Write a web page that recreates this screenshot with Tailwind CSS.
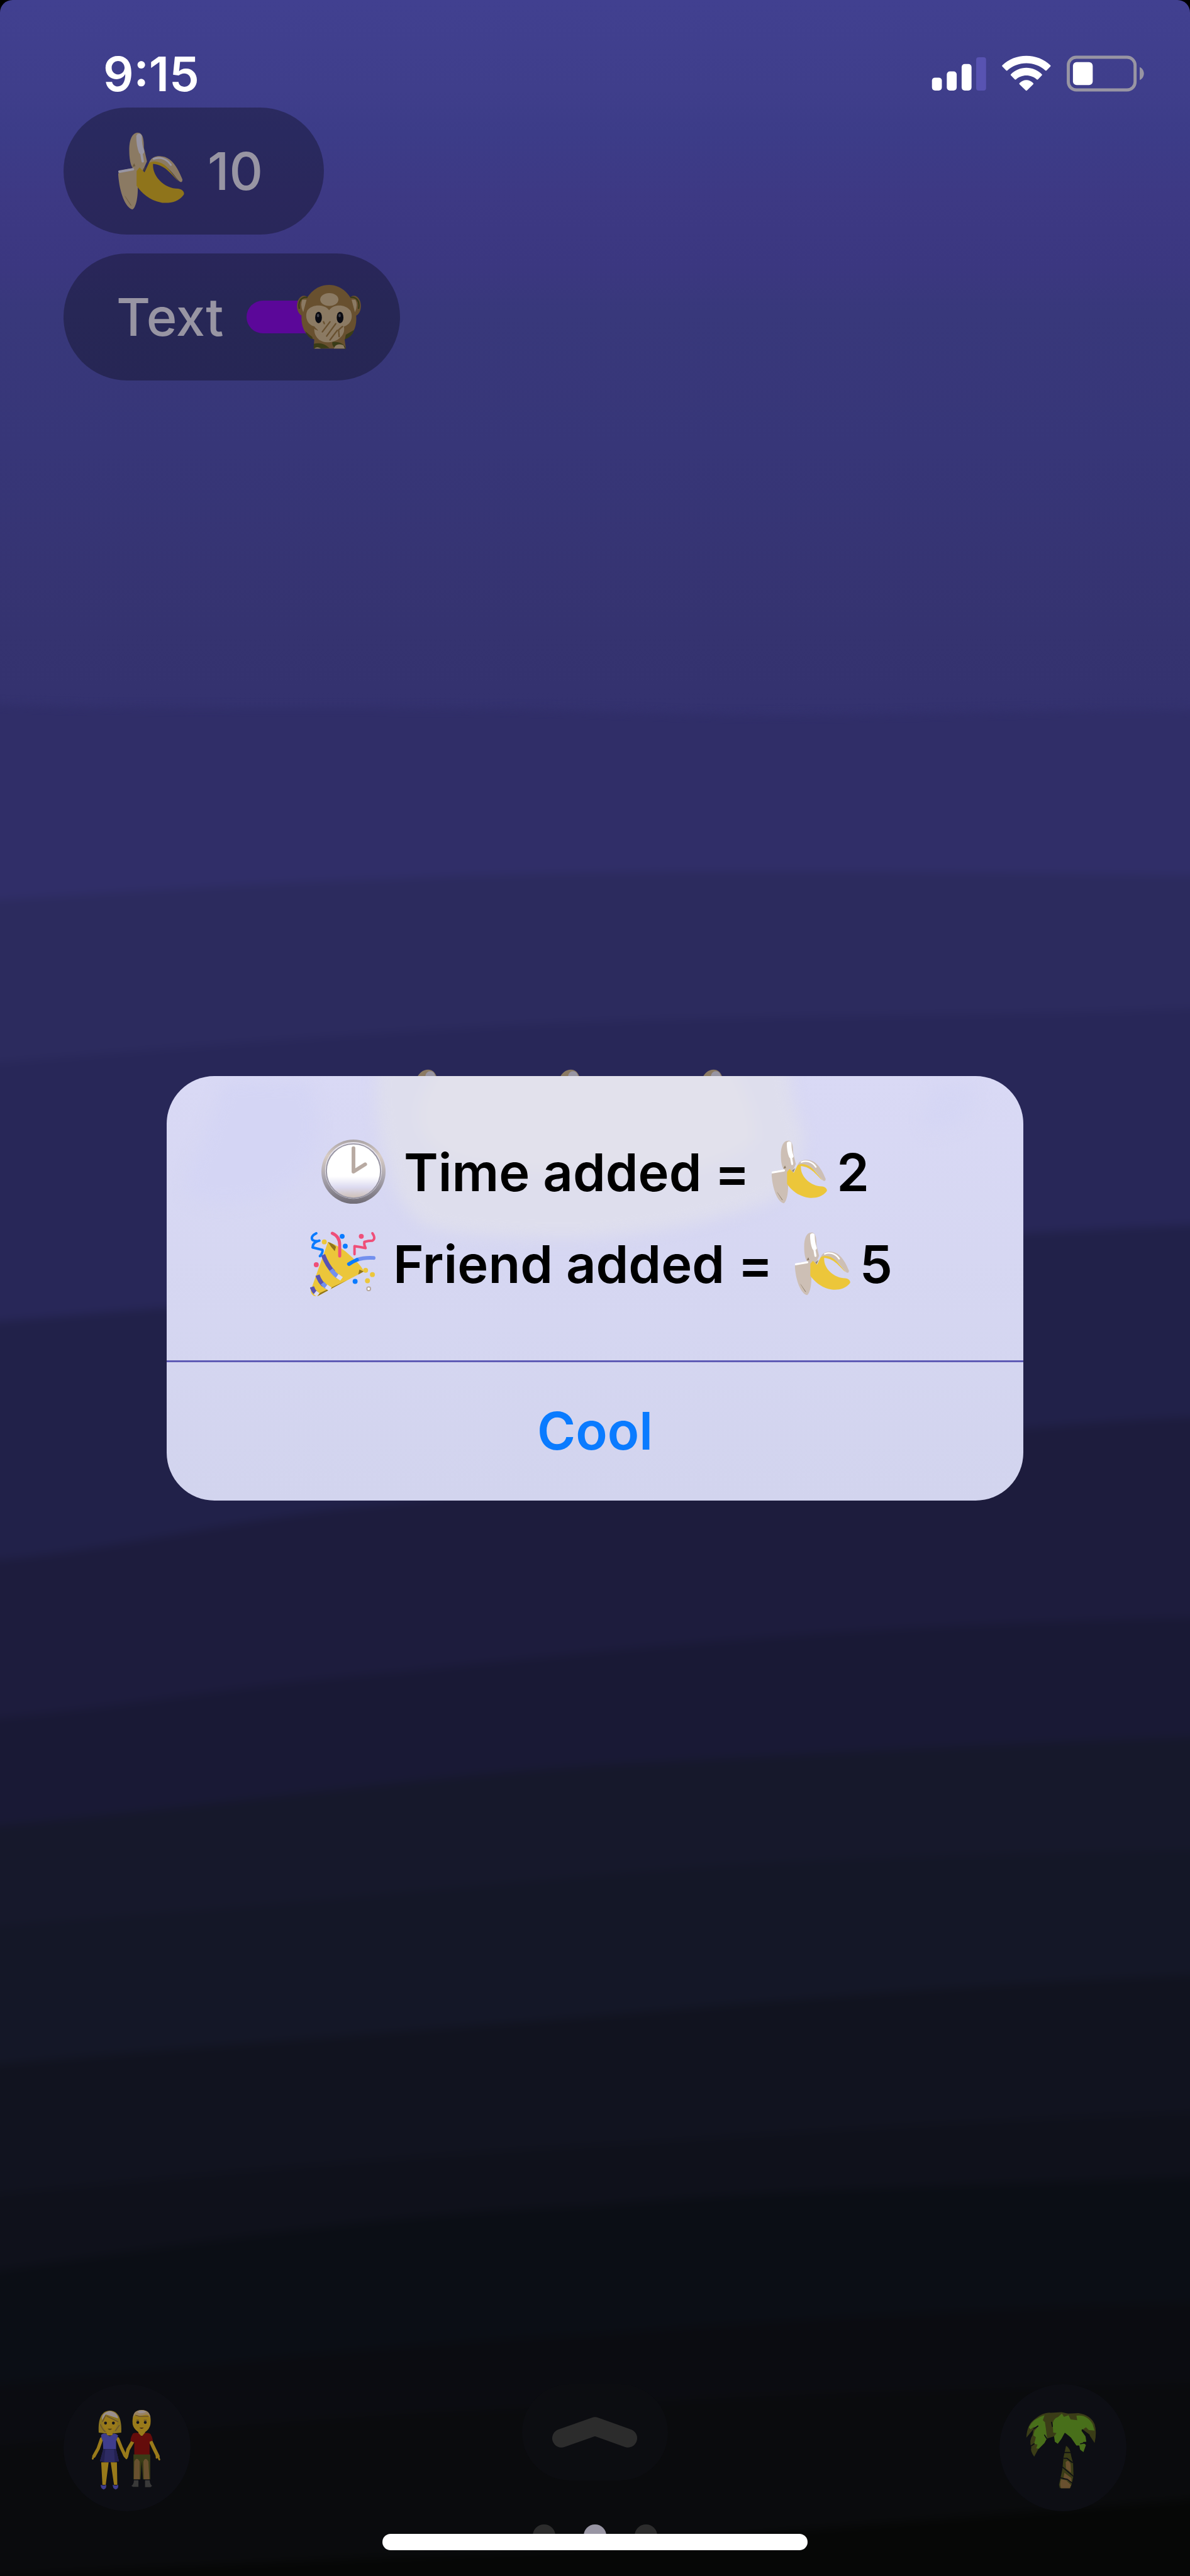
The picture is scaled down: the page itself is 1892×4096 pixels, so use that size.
<!DOCTYPE html>
<html lang="en">
<head>
    <meta charset="UTF-8">
    <meta name="viewport" content="width=device-width, initial-scale=1.0">
    <script src="https://cdn.jsdelivr.net/npm/@tailwindcss/browser@4"></script>

    <title>Bananas</title>
</head>
<body class="bg-black font-['Inter','Liberation_Sans',sans-serif]">

<!-- shared banana: fill = skin, currentColor = peel, stroke = highlight -->
<svg class="hidden">
  <symbol id="banana" viewBox="9 12 110 128" preserveAspectRatio="none">
    <path stroke="none" fill="currentColor" d="M35 72C30 68 28 55 28 42C28 24 33 13 42 13C51 13 52 26 52 38L57 60L50 76L37 76Z"/>
    <path stroke="none" fill="currentColor" d="M10 82C10 74 22 73 36 71L42 74V105C42 125 37 139 33 139C22 136 12 112 10 82Z"/>
    <path fill="none" stroke-width="9" stroke-linecap="round" d="M44 19C44 28 45 36 48 44"/>
    <path fill="none" stroke-width="4" stroke-linecap="round" d="M47 42L50 60M12 77L34 73"/>
    <path stroke="none" fill="currentColor" d="M60 64C62 54 72 50 82 52C98 54 108 72 115 90C115 95 112 95 109 92C98 80 90 62 66 62Z"/>
    <path fill="none" stroke-width="3" stroke-linecap="round" d="M68 56C77 52 89 55 96 66"/>
    <path stroke="none" d="M40 76L45 70L53 78L60 63C68 57 82 61 91 71C98 79 104 87 109 93C98 84 88 66 67 64C65 84 85 105 108 105C115 106 119 111 117 115C108 127 95 129 82 128C62 125 48 112 40 100Z"/>
    <path stroke="none" fill="#5c4a28" fill-opacity=".6" d="M50 73L56 68L52 77ZM33 69L36 63L38 68ZM20 116L22 118L32 133L30 132Z"/>
  </symbol>
</svg>

<div class="relative flex min-h-screen flex-col overflow-hidden rounded-t-[20px] bg-[#060706]">

  <!-- night sky, painted in soft bands -->
  <svg class="absolute inset-0 h-full w-full" viewBox="0 0 1920 4157" preserveAspectRatio="none" aria-hidden="true">
    <defs>
      <linearGradient id="sky" gradientUnits="userSpaceOnUse" x1="0" y1="0" x2="0" y2="1200">
        <stop offset="0" stop-color="#414090"/>
        <stop offset=".12" stop-color="#3f3e8b"/>
        <stop offset=".18" stop-color="#3c3c88"/>
        <stop offset=".26" stop-color="#3d3984"/>
        <stop offset=".36" stop-color="#3b3780"/>
        <stop offset=".42" stop-color="#38387b"/>
        <stop offset=".6" stop-color="#373678"/>
        <stop offset=".85" stop-color="#353370"/>
        <stop offset="1" stop-color="#33316e"/>
      </linearGradient>
      <filter id="soft" x="-5%" y="-5%" width="110%" height="110%" color-interpolation-filters="sRGB"><feGaussianBlur stdDeviation="7"/></filter>
    </defs>
    <rect width="1920" height="1300" fill="url(#sky)"/>
    <g filter="url(#soft)">
      <path fill="#302e68" d="M-40 1136C300 1150 700 1135 1100 1152C1400 1160 1700 1140 1960 1148V4200H-40Z"/>
      <path fill="#2c2b5e" d="M-40 1455C200 1440 400 1425 640 1418C1000 1400 1500 1405 1960 1414V4200H-40Z"/>
      <path fill="#282758" d="M-40 1718C300 1690 700 1655 1050 1646C1400 1635 1700 1640 1960 1625V4200H-40Z"/>
      <path fill="#212149" d="M-40 2136C200 2115 400 2100 700 2075C1100 2020 1500 1995 1960 1975V4200H-40Z"/>
      <path fill="#1d1c3d" d="M-40 2520C150 2510 380 2450 600 2430C1000 2390 1400 2310 1960 2285V4200H-40Z"/>
      <path fill="#191935" d="M-40 2775C150 2765 400 2715 650 2698C1000 2660 1400 2620 1960 2610V4200H-40Z"/>
      <path fill="#16182b" d="M-40 2950C300 2920 650 2870 950 2850C1300 2830 1600 2815 1960 2802V4200H-40Z"/>
      <path fill="#141727" d="M-40 3110C400 3080 800 3040 1100 3015C1400 2995 1700 2990 1960 2985V4200H-40Z"/>
      <path fill="#11131f" d="M-40 3335C300 3305 700 3275 950 3255C1300 3225 1600 3200 1960 3186V4200H-40Z"/>
      <path fill="#0f111b" d="M-40 3545C300 3510 700 3475 1000 3460C1300 3440 1600 3420 1960 3408V4200H-40Z"/>
      <path fill="#0b0e15" d="M-40 3670C300 3620 650 3570 950 3560C1300 3530 1600 3525 1960 3512V4200H-40Z"/>
      <path fill="#0b0c11" d="M-40 3850C300 3822 650 3780 950 3768C1300 3740 1600 3725 1960 3715V4200H-40Z"/>
      <path fill="#0a0b0d" d="M-40 3950C300 3920 600 3895 900 3885C1300 3860 1600 3855 1960 3845V4200H-40Z"/>
      <path fill="#060706" d="M-40 4160C300 4140 700 4125 1000 4110C1300 4080 1600 4060 1960 4030V4200H-40Z"/>
    </g>
  </svg>

  <!-- status bar -->
  <header class="relative flex h-[171px] items-center pt-[62px] pl-[164px] pr-[73px]">
    <time class="text-[76px] leading-none font-semibold text-white">9:15</time>
    <div class="ml-auto flex gap-[25px]">
      <svg class="h-[58px] w-[87px]" viewBox="1503 88 88 59" role="img" aria-label="Signal">
        <g fill="#fff">
          <rect x="1503.5" y="124" width="16" height="21" rx="5"/>
          <rect x="1527.5" y="114" width="16" height="31" rx="5"/>
          <rect x="1551.5" y="102" width="16" height="43" rx="5"/>
        </g>
        <rect x="1575" y="91" width="16" height="54" rx="4" fill="#5853b2"/>
      </svg>
      <svg class="h-[58px] w-[78px]" viewBox="471 84 233 177" preserveAspectRatio="none" fill="#fff" role="img" aria-label="Wi-Fi">
        <path d="M473 132C504 102 543 86 587 86C631 86 670 102 701 132Q704 135 701 138L683 157Q680 160 677 157C652 134 621 122 587 122C553 122 522 134 497 157Q494 160 491 157L473 138Q470 135 473 132Z"/>
        <path d="M513 176C533 155 559 144 587 144C615 144 641 155 661 176Q663 179 660 182L642 201Q639 204 636 201C623 189 606 182 587 182C568 182 551 189 538 201Q535 204 532 201L514 182Q511 179 513 176Z"/>
        <path d="M554 219Q570 204 587 204Q604 204 620 219Q622 222 619 225L590 254Q587 257 584 254L555 225Q552 222 554 219Z"/>
      </svg>
      <svg class="h-[58px] w-[123px]" viewBox="1720 88 125 59" role="img" aria-label="Battery">
        <rect x="1722.5" y="91" width="108" height="53" rx="13" fill="none" stroke="#9895a3" stroke-width="5"/>
        <rect x="1730" y="99" width="32" height="37" rx="6" fill="#fff"/>
        <path d="M1838 107C1847 111 1847 124 1838 128Z" fill="#9895a3"/>
      </svg>
    </div>
  </header>

  <!-- score and text toggle -->
  <main class="relative flex flex-1 flex-col items-start gap-[30px] pl-[101px] text-[83px] leading-none font-medium text-[#9895a3]">
    <div class="flex h-[202px] items-center gap-[36px] rounded-full bg-black/30 pr-[97px] pl-[86px]">
      <svg class="h-[124px] w-[107px] fill-[#8f741b] stroke-[#9895a3] text-[#8b7a63]" role="img" aria-label="Bananas"><use href="#banana"/></svg>
      <span>10</span>
    </div>
    <div class="flex h-[202px] items-center gap-[36px] rounded-full bg-black/30 pr-[62px] pl-[84px]">
      <label for="text-toggle">Text</label>
      <div class="relative flex w-[182px] items-center">
        <input id="text-toggle" type="checkbox" checked class="h-[52px] w-[140px] appearance-none rounded-full bg-[#5b0799]">
        <svg class="pointer-events-none absolute right-0 h-[102px] w-[102px]" viewBox="1046 1122 267 268" aria-hidden="true">
          <g fill="#68502f">
            <ellipse cx="1075" cy="1210" rx="29" ry="43"/>
            <ellipse cx="1284" cy="1210" rx="29" ry="43"/>
            <path d="M1180 1122C1235 1122 1275 1165 1290 1225C1300 1280 1292 1325 1245 1350L1250 1388H1116L1118 1350C1070 1330 1058 1280 1068 1225C1082 1165 1125 1122 1180 1122Z"/>
          </g>
          <path fill="none" stroke="#3a3c17" stroke-width="6" d="M1056 1222C1048 1190 1066 1170 1090 1174M1303 1222C1311 1190 1293 1170 1269 1174"/>
          <path fill="#3a3c17" d="M1116 1388V1368Q1150 1358 1182 1386ZM1194 1360Q1240 1358 1250 1388H1206Q1190 1375 1194 1360ZM1250 1330L1285 1310Q1276 1340 1246 1350ZM1080 1315L1110 1340L1112 1350Q1090 1340 1080 1315Z"/>
          <g fill="#8b7a63">
            <ellipse cx="1181" cy="1183" rx="38" ry="27"/>
            <path d="M1180 1228C1164 1202 1110 1200 1090 1228C1076 1256 1090 1290 1120 1296C1112 1325 1132 1362 1172 1362C1218 1362 1250 1330 1242 1296C1270 1288 1284 1256 1268 1228C1246 1200 1196 1202 1180 1228Z"/>
            <path d="M1068 1184Q1058 1208 1072 1236L1086 1184ZM1290 1184Q1302 1208 1288 1236L1274 1184Z"/>
            <path d="M1118 1388Q1130 1378 1146 1388ZM1200 1388Q1208 1362 1240 1374L1246 1388Z"/>
          </g>
          <path fill="none" stroke="#68502f" stroke-width="6" stroke-linecap="round" d="M1160 1284L1157 1276M1152 1318L1184 1276M1170 1336L1208 1284M1184 1352L1214 1312M1130 1312L1118 1300M1222 1338L1220 1310L1236 1296"/>
          <path fill="none" stroke="#8b7a63" stroke-width="9" stroke-linecap="round" d="M1126 1314L1140 1326M1228 1322L1236 1306"/>
          <ellipse cx="1136" cy="1258" rx="14" ry="24" fill="#0a0b12"/>
          <ellipse cx="1226" cy="1258" rx="14" ry="24" fill="#0a0b12"/>
          <ellipse cx="1134" cy="1250" rx="5" ry="7" fill="#40414a"/>
          <ellipse cx="1224" cy="1250" rx="5" ry="7" fill="#40414a"/>
        </svg>
      </div>
    </div>
  </main>

  <!-- bottom navigation -->
  <footer class="relative flex items-start justify-between px-[101px] pb-[103px]">
    <button class="h-[202px] w-[202px] rounded-full bg-[#0d0e14]" aria-label="Friends">
      <svg class="h-full w-full" viewBox="68 88 614 614" aria-hidden="true">
        <!-- woman -->
        <path fill="#8b7420" d="M238 322C234 260 250 216 292 216C334 216 350 260 347 322L312 326H270Z"/>
        <path fill="#9a8f8f" d="M262 232Q292 204 322 232Q332 244 332 254L272 234L254 262Q252 242 262 232Z"/>
        <path fill="#997a1a" d="M255 276L272 240L328 270Q324 306 306 316L306 336H276V316Q258 304 255 276Z"/>
        <path fill="none" stroke="#68502f" stroke-width="4" d="M246 282Q254 306 270 318M272 238L256 270M276 242L332 270M338 286L318 314"/>
        <circle cx="271" cy="276" r="7" fill="#14141c"/><circle cx="309" cy="276" r="7" fill="#14141c"/>
        <path fill="#4a3b16" d="M281 303H303Q292 316 281 303Z"/>
        <path fill="none" stroke="#997a1a" stroke-width="16" stroke-linecap="round" stroke-linejoin="round" d="M252 352L236 398L215 436M330 352L346 392L366 434"/>
        <path fill="none" stroke="#997a1a" stroke-width="9" stroke-linecap="round" d="M214 434L209 448M360 430L372 446"/>
        <path fill="#3f3d8c" d="M250 332Q262 324 274 327Q292 350 308 327Q322 326 332 336L322 362V402H260L258 362Q248 346 250 332Z"/>
        <path fill="#2d2b63" d="M260 402H322L336 460Q292 472 244 460Z"/>
        <path fill="#232150" d="M260 402H270L264 464L244 460ZM322 402H312L316 464L336 460Z"/>
        <path fill="#997a1a" d="M250 466H286L272 574H256ZM296 466H326L328 574H312Z"/>
        <path fill="#3f3d8c" d="M248 574Q262 580 274 574Q278 590 262 597Q246 590 248 574ZM306 574Q320 580 332 574Q336 590 320 597Q304 590 306 574Z"/>
        <!-- man -->
        <path fill="#997a1a" d="M402 282C398 240 412 213 445 213C480 213 494 240 488 282Q484 306 462 320V338H430V320Q406 304 402 282Z"/>
        <path fill="#9a8260" d="M404 252Q404 214 445 213Q486 214 488 252Q480 232 462 236Q430 246 414 234Z"/>
        <path fill="#9a8f8f" d="M424 220Q445 210 468 220Q458 230 432 228Z"/>
        <path fill="none" stroke="#68502f" stroke-width="4" d="M416 238L436 244H478M420 262H432M456 262H470"/>
        <circle cx="427" cy="273" r="7" fill="#14141c"/><circle cx="463" cy="273" r="7" fill="#14141c"/>
        <path fill="#4a2f16" d="M435 298H456Q445 310 435 298Z"/>
        <path fill="none" stroke="#997a1a" stroke-width="17" stroke-linecap="round" stroke-linejoin="round" d="M402 366L380 404L372 438M490 366L508 404L524 436"/>
        <path fill="none" stroke="#997a1a" stroke-width="9" stroke-linecap="round" d="M524 434L531 452M518 430V444"/>
        <path fill="#640c0b" d="M404 326Q418 321 430 324L446 341L460 324Q478 322 488 328Q498 344 500 360L484 366V430H410V370L391 362Q394 340 404 326Z"/>
        <path fill="#3a3c17" d="M406 428H487V548H452L446 460L440 548H406Z"/>
        <path fill="#68502f" d="M410 462Q422 436 436 462V548H408ZM454 462Q464 436 478 462L483 548H456Z"/>
        <path fill="#393939" d="M408 552H430V584H404L396 580Q408 572 408 552ZM462 552H484Q486 572 496 580L488 586H462Z"/>
      </svg>
    </button>

    <button class="flex h-[153px] w-[232px] items-center justify-center rounded-[76px] bg-[#0c0d11]" aria-label="Open">
      <svg class="h-[50px] w-[136px]" viewBox="891 3897 138 50" aria-hidden="true">
        <path d="M906 3931L960 3912L1013 3931" fill="none" stroke="#2c2c2c" stroke-width="30" stroke-linecap="round" stroke-linejoin="round"/>
      </svg>
    </button>

    <button class="h-[202px] w-[202px] rounded-full bg-[#0d0e14]" aria-label="Island">
      <svg class="h-full w-full" viewBox="98 88 614 614" aria-hidden="true">
        <path fill="#3a3c17" d="M228 346Q232 280 270 256Q310 222 346 226L398 223L430 230L480 228Q540 238 558 282Q570 320 558 372L530 330L500 310L420 322L330 350L286 402L266 438Q246 410 252 394Q240 360 258 334L262 306Z"/>
        <path fill="#486f1a" d="M240 296Q262 254 316 238L308 262L318 272L322 300L328 348L316 372L288 400L276 398L282 380L266 376L274 344L262 336L268 312L286 292L262 296L248 306Z"/>
        <path fill="#486f1a" d="M356 290Q352 256 382 246L400 230L410 246L432 238L442 258L474 262L470 240Q520 232 548 280L558 312L530 310L516 296L494 312L514 340L518 366L500 368L516 382L504 416L488 404L484 384L470 384L444 346L434 338L414 322L398 352L380 376L366 366L362 340L374 324L358 322Z"/>
        <path fill="none" stroke="#0d0e14" stroke-width="5" stroke-linecap="round" d="M284 290L264 304M326 350L316 334M252 386L266 376M498 308L532 334M514 372L490 376M350 272L354 292"/>
        <path fill="#3a3c17" d="M420 386Q434 394 440 412L446 440L454 470L456 530L448 570L440 590H390L386 574L402 500L408 440Z"/>
        <path fill="#68502f" d="M418 466Q430 448 442 474L444 516L420 496ZM412 516L446 542V562L424 552L408 540ZM396 548L420 552L444 576L438 591H396Q388 572 396 548Z"/>
        <path fill="none" stroke="#0d0e14" stroke-width="5" d="M410 418H446M408 446L424 446L452 468M402 488L456 534M392 540L426 548L452 568"/>
      </svg>
    </button>
  </footer>

  <!-- page dots and home indicator -->
  <div class="absolute inset-x-0 bottom-[46px] flex justify-center gap-[45px]">
    <span class="h-[36px] w-[36px] rounded-full bg-[#2c2c2c]"></span>
    <span class="h-[36px] w-[36px] rounded-full bg-[#9895a3]"></span>
    <span class="h-[36px] w-[36px] rounded-full bg-[#2c2c2c]"></span>
  </div>
  <div class="absolute inset-x-0 bottom-[41px] flex justify-center">
    <span class="h-[26px] w-[676px] rounded-full bg-white"></span>
  </div>

  <!-- alert -->
  <div class="absolute inset-0 flex items-center justify-center">
    <div class="relative w-[72%]">
      <div class="absolute inset-x-0 -top-3 flex justify-center gap-[35px] fill-[#8f741b] stroke-[#9895a3] text-[#8b7a63]" aria-hidden="true">
        <svg class="h-[223px] w-[192px]"><use href="#banana"/></svg>
        <svg class="h-[223px] w-[192px]"><use href="#banana"/></svg>
        <svg class="h-[223px] w-[192px]"><use href="#banana"/></svg>
      </div>

      <div role="alertdialog" aria-labelledby="alert-title" class="relative overflow-hidden rounded-[76px] bg-linear-to-b from-[#d9d9f5] to-[#d2d4ee]">
        <svg class="absolute inset-0 h-full w-full" viewBox="270 1737 1382 685" preserveAspectRatio="none" aria-hidden="true">
          <defs><filter id="haze" color-interpolation-filters="sRGB"><feGaussianBlur stdDeviation="12"/></filter></defs>
          <g filter="url(#haze)">
            <path fill="#dedeed" d="M612 1700H1272Q1275 1780 1298 1830Q1290 1910 1240 1940Q1100 1990 940 1998Q760 2000 690 1980Q640 1950 628 1880Q600 1820 612 1700Z"/>
            <path fill="#e2e1ec" d="M730 1700H1170Q1220 1780 1220 1840Q1180 1880 1080 1895Q900 1900 760 1880Q680 1860 676 1800Q680 1750 730 1700Z"/>
            <path fill="#d4d5f4" d="M362 1745L500 1748Q520 1800 508 1860Q480 1920 420 1935Q350 1955 302 1930Q300 1890 330 1840Z"/>
            <path fill="#d5d6f4" d="M1508 1755L1572 1753Q1574 1800 1550 1815L1500 1830L1488 1810Z"/>
          </g>
        </svg>

        <div id="alert-title" class="relative flex flex-col py-[80px] text-[83px] leading-[146px] font-semibold text-black">
          <div class="flex items-center justify-center">
            <svg class="mr-[28px] h-[103px] w-[104px]" viewBox="0 0 106 105" role="img" aria-label="Two o'clock">
              <defs>
                <linearGradient id="rim" x1="0" y1="0" x2="0" y2="1">
                  <stop offset="0" stop-color="#a8a2a4"/><stop offset=".25" stop-color="#d8ccc4"/><stop offset=".6" stop-color="#a9a5ae"/><stop offset="1" stop-color="#706c76"/>
                </linearGradient>
                <linearGradient id="face" x1="0" y1="0" x2="0" y2="1">
                  <stop offset="0" stop-color="#fff"/><stop offset=".6" stop-color="#fff"/><stop offset=".8" stop-color="#dcdaf0"/><stop offset="1" stop-color="#cdbfb5"/>
                </linearGradient>
              </defs>
              <circle cx="53" cy="52" r="52" fill="url(#rim)"/>
              <circle cx="53" cy="50" r="46" fill="#e6e3ec"/>
              <circle cx="53" cy="51" r="44" fill="url(#face)" stroke="#9895a3" stroke-width="2"/>
              <path d="M53 14V52L72 40" fill="none" stroke="#b8aaa2" stroke-width="6" stroke-linecap="round" stroke-linejoin="round"/>
            </svg>
            <span>Time added =</span>
            <svg class="ml-[34px] h-[101px] w-[90px] fill-[#ecc63a] stroke-white text-[#cdbfb5]" role="img" aria-label="Bananas"><use href="#banana"/></svg>
            <span class="ml-[14px]">2</span>
          </div>
          <div class="flex items-center justify-center pl-[20px]">
            <svg class="mr-[28px] h-[103px] w-[104px]" viewBox="0 0 106 105" role="img" aria-label="Party">
              <path fill="#ecc63a" d="M29 17Q50 24 66 40Q84 56 87 65L12 105Q2 106 1 96Z"/>
              <path fill="#8f741b" d="M29 17Q38 20 42 25L40 32L34 25ZM87 65L60 80L78 70L80 62ZM60 79L12 105L16 100Z"/>
              <g fill="none">
                <path stroke="#5853b2" stroke-width="7" d="M21 38Q28 56 38 66M12 71Q16 82 22 87M3 90Q5 96 9 100"/>
                <path stroke="#7390ee" stroke-width="7" d="M34 62Q40 70 46 74M20 84Q24 89 28 91"/>
                <path stroke="#dcdcf5" stroke-width="7" d="M44 72L51 77M26 89L33 94M8 99L13 103"/>
                <g stroke-linecap="round" stroke-linejoin="round">
                  <path stroke="#0a7bff" stroke-width="4" d="M10 3Q0 8 4 14Q10 17 15 15Q4 18 4 26Q12 28 20 30Q21 35 16 40"/>
                  <path stroke="#ef4f79" stroke-width="5" d="M36 3Q48 8 48 22V40"/>
                  <path stroke="#ef4f79" stroke-width="4" d="M101 3Q107 12 101 15Q94 15 88 17Q87 22 90 27Q80 25 72 24L72 37"/>
                  <path stroke="#7390ee" stroke-width="6" d="M76 46Q88 42 103 43"/>
                  <path stroke="#0a7bff" stroke-width="6" d="M63 53Q69 49 76 46"/>
                </g>
              </g>
              <g fill="#0a7bff"><circle cx="52" cy="8" r="4"/><circle cx="57" cy="24" r="4"/><circle cx="73" cy="81" r="4"/></g>
              <g fill="#ef4f79"><circle cx="83" cy="8" r="4"/><circle cx="10" cy="54" r="4"/></g>
              <g fill="#ecc63a"><circle cx="23" cy="17" r="4"/><circle cx="90" cy="63" r="4"/><circle cx="101" cy="70" r="4"/><circle cx="93" cy="80" r="4"/></g>
              <circle cx="95" cy="93" r="3" fill="#fff" stroke="#b8aaa2" stroke-width="2"/>
            </svg>
            <span>Friend added =</span>
            <svg class="ml-[34px] h-[101px] w-[90px] fill-[#ecc63a] stroke-white text-[#cdbfb5]" role="img" aria-label="Bananas"><use href="#banana"/></svg>
            <span class="ml-[14px]">5</span>
          </div>
        </div>

        <button class="relative block h-[223px] w-full border-t-3 border-[#5f5bb5] text-[83px] leading-none font-semibold text-[#0a7bff]">Cool</button>
      </div>
    </div>
  </div>

</div>

</body>
</html>
